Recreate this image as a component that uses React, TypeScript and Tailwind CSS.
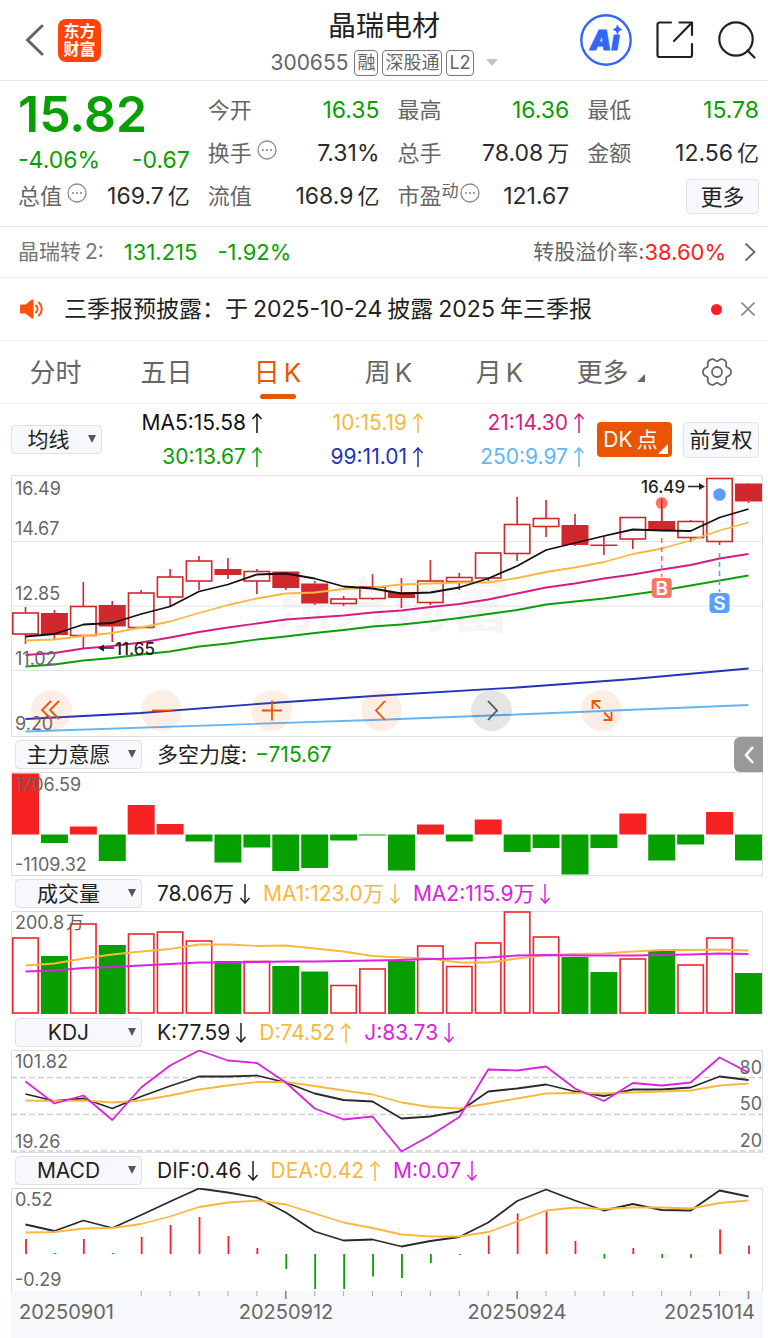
import React from 'react';

const GREEN = '#08a000';
const RED = '#f62222';
const CANDLE = '#d0282c';
const STEP = 28.92;
const cx = (i: number) => 14.5 + STEP * i;

const points = (ys: number[]) => ys.map((y, i) => `${cx(i)},${y}`).join(' ');

// top of body, bottom of body, high, low, filled
const candles: [number, number, number, number, boolean][] = [
  [138, 159, 132, 169, false],
  [138, 160, 135, 164, true],
  [131.5, 160.5, 107, 173, false],
  [130, 151.5, 126, 167, true],
  [118, 152.5, 115, 152.5, false],
  [102, 122, 94, 131, false],
  [86, 106, 81, 115, false],
  [94, 100, 83, 104, true],
  [96.5, 106, 94, 119, false],
  [96.5, 113, 96.5, 115, true],
  [108.5, 128.5, 106, 130, true],
  [124, 128.5, 121, 131, false],
  [112, 123.5, 99, 125, false],
  [117, 123, 103, 133, true],
  [106, 127.5, 85, 130, false],
  [102.5, 106.5, 98, 115, false],
  [78, 103, 78, 106, false],
  [49.5, 78.5, 22, 86, false],
  [43.5, 51.5, 25, 62, false],
  [50, 70, 39, 71, true],
  [69.5, 71, 61, 80, true],
  [42.5, 64, 42.5, 74, false],
  [46, 55, 23, 55, true],
  [46.5, 62.5, 45, 67, false],
  [3.5, 66.5, 3.5, 70, false],
  [8.5, 26.5, 8, 28, true],
];

const ma5 = [161.5, 159, 149.5, 148, 139, 131.5, 116.5, 109.5, 99.5, 98.5, 103.5, 111.5, 113.5, 118.5, 117.5, 112.5, 103.5, 91, 75, 68, 61, 54.5, 55.5, 56, 42.5, 34];
const ma10 = [165.5, 164.5, 161, 158, 152.5, 146.5, 138, 130, 123.5, 118.5, 117.5, 114, 112.5, 109.5, 108.5, 107.5, 107.5, 103, 97, 92.5, 87, 79, 73.5, 65.5, 55.5, 47.5];
const ma21 = [180, 178, 173.5, 171, 167.5, 162.5, 157, 152.5, 148.5, 144.5, 142.5, 140.5, 137.5, 135.5, 132, 129, 124.5, 118.5, 112.5, 108.5, 103.5, 99.5, 94.5, 90, 83.5, 79];
const ma30 = [191.5, 189.5, 185.5, 183, 179.5, 176.5, 171.5, 168.5, 164.5, 161.5, 158, 155, 151.5, 149.5, 146.5, 143, 139, 135, 129.5, 126.5, 123.5, 119.5, 115.5, 110.5, 105.5, 100.5];

const force = [61, -8.5, 8, -26.5, 29.5, 10.5, -7, -28, -13, -36.5, -33.5, -6, -1, -36, 10, -7, 15, -17.5, -13.5, -40, -13.5, 21, -26, -10, 22.5, -26];

// negative = falling day, drawn solid
const volumes = [76, -58, 90, -69, 80, 82, 73, -53, 52.5, -48, -42.5, 28.5, 45, -53, 68, 47.5, 71, 102, 77, -57, -42, 55, -63, 49, 76, -41];
const volMa1 = [54.5, 52.5, 47.5, 43.5, 40.5, 38, 33.5, 33.5, 35, 34.5, 37.5, 40.5, 45, 46.5, 47.5, 51.5, 51.5, 47.5, 44, 43, 42.5, 40.5, 39, 39, 38.5, 39.5];
const volMa2 = [60.5, 59.5, 57, 56, 54.5, 53, 51.5, 51.5, 51, 50.5, 50.5, 50, 49.5, 49, 48, 47.5, 46.5, 44.5, 44, 44.5, 44.5, 44.5, 44, 43.5, 42.5, 43];

const kLine = [44, 51, 48.5, 58.5, 46.5, 36, 26.5, 26.5, 25.5, 32.5, 43.5, 50, 51.5, 68.5, 66.5, 61.5, 41.5, 38.5, 34.5, 41.5, 46, 39.5, 39.5, 37.5, 26.5, 30];
const dLine = [50.5, 51, 50.5, 52.5, 50.5, 45.5, 39.5, 35.5, 32, 32, 36, 40.5, 44.5, 52.5, 57, 58.5, 53.5, 48.5, 43.5, 43, 43.5, 42.5, 41.5, 40.5, 35.5, 33.5];
const jLine = [31.5, 53.5, 45.5, 70, 37.5, 15.5, 0.5, 10.5, 13, 32.5, 58.5, 69.5, 66.5, 101.5, 85.5, 67, 19.5, 20.5, 16.5, 38.5, 51, 33, 35.5, 32.5, 7.5, 22.5];

const dif = [36.5, 43, 32.5, 40, 27, 13.5, 0.5, 4.5, 9.5, 24.5, 43.5, 52.5, 51.5, 58.5, 53, 49, 34.5, 13, 1.5, 12.5, 22.5, 16, 22, 22.5, 2.5, 8.5];
const dea = [44.5, 44, 40.5, 40, 36, 28.5, 19, 14.5, 12.5, 16.5, 25.5, 34.5, 40, 46.5, 48.5, 48.5, 44, 33.5, 22.5, 19.5, 21, 19.5, 19.5, 20.5, 15, 12.5];
const macd = [15, 1, 15, 1, 17, 29, 37, 18, 6, -15, -35, -35, -22.5, -24, -9, -1, 18.5, 40.5, 42.5, 13, -4.5, 6, -4, -4, 24.5, 8.5];

const gear = Array.from({ length: 120 }, (_, n) => {
  const a = (n * Math.PI) / 60;
  const r = 12.7 + 1.6 * Math.cos(6 * a) - 0.3 * Math.cos(12 * a);
  return `${(15 + r * Math.cos(a)).toFixed(2)},${(15 + r * Math.sin(a)).toFixed(2)}`;
}).join(' ');

const Arrow = ({ down = false }: { down?: boolean }) => (
  <svg
    viewBox="0 0 12 20"
    className={down ? 'ml-[5px] h-5 w-3 shrink-0 rotate-180' : 'ml-[5px] h-5 w-3 shrink-0'}
    fill="none"
    stroke="currentColor"
    strokeWidth="1.5"
  >
    <path d="M6 20V1M1.5 6 6 1l4.5 5" />
  </svg>
);

const Dots = () => (
  <svg viewBox="0 0 20 20" className="mb-2 ml-[5px] h-5 w-5 shrink-0" fill="#8a8a8a">
    <circle cx="10" cy="10" r="9" fill="none" stroke="#8a8a8a" strokeWidth="1.3" />
    <circle cx="6" cy="10" r="1.1" />
    <circle cx="10" cy="10" r="1.1" />
    <circle cx="14" cy="10" r="1.1" />
  </svg>
);

type CellProps = {
  label: string;
  value: string;
  unit?: string;
  green?: boolean;
  dots?: boolean;
  sup?: string;
};

const Cell = ({ label, value, unit, green, dots, sup }: CellProps) => (
  <div className="flex h-[43px] items-center justify-between">
    <dt className="flex items-center whitespace-nowrap text-[22px] text-[#666]">
      {label}
      {sup && <span className="mb-3 text-[17px] leading-5">{sup}</span>}
      {dots && (sup ? <span className="-ml-1 flex"><Dots /></span> : <Dots />)}
    </dt>
    <dd className={green ? 'whitespace-nowrap text-[#08a000]' : 'whitespace-nowrap text-[#2b2b2b]'}>
      {value}
      {unit && <span className="ml-1 text-[22px]">{unit}</span>}
    </dd>
  </div>
);

const Picker = ({ label, options, wide }: { label: string; options: string[]; wide?: boolean }) => (
  <div className={wide ? 'relative w-[127px] shrink-0' : 'relative w-[91px] shrink-0'}>
    <select
      aria-label={label}
      className={
        wide
          ? 'block h-[29px] w-full appearance-none rounded border border-[#dfe1e6] bg-[#f7f8fb] pr-5 text-center text-[21px] leading-[27px] text-[#222]'
          : 'block h-[29px] w-full appearance-none rounded border border-[#dfe1e6] bg-[#f7f8fb] pr-4 text-center text-[21px] leading-[27px] text-[#222]'
      }
    >
      {options.map((o) => (
        <option key={o}>{o}</option>
      ))}
    </select>
    <svg viewBox="0 0 8 8" className="pointer-events-none absolute right-[6px] top-[10px] h-2 w-2" fill="#555">
      <path d="M0 0h8L4 8z" />
    </svg>
  </div>
);

const Legend = ({ text, color, down }: { text: string; color: string; down?: boolean }) => (
  <span className="flex items-center whitespace-nowrap" style={{ color }}>
    {text}
    <Arrow down={down} />
  </span>
);

const Frame = ({ h }: { h: number }) => (
  <path d={`M.5 ${h}V.5H751.5V${h}`} fill="none" stroke="#dddee2" />
);

const Line = ({ ys, color }: { ys: number[]; color: string }) => (
  <polyline points={points(ys)} fill="none" stroke={color} strokeWidth="1.8" strokeLinejoin="round" />
);

const KChart = () => (
  <svg viewBox="0 0 752 262" className="block w-full">
    <text x="381" y="152" fontSize="59" fontWeight="700" fill="#f6f6f7" textAnchor="middle">东方财富</text>
    <g stroke="#e3e4ea">
      <path d="M0 66.5H752M0 131H752M0 195.5H752" />
      <path d="M.5 262V.5H751.5V262M0 261.5H752" fill="none" stroke="#dddee2" />
    </g>
    <g stroke={CANDLE} strokeWidth="1.6">
      {candles.map(([top, bottom, high, low, filled], i) => (
        <g key={i}>
          <path d={`M${cx(i)} ${high}V${top}M${cx(i)} ${bottom}V${low}`} />
          {filled ? (
            <rect x={cx(i) - 13.5} y={top} width="27" height={bottom - top} fill={CANDLE} stroke="none" />
          ) : (
            <rect x={cx(i) - 12.7} y={top} width="25.4" height={bottom - top} fill="none" />
          )}
        </g>
      ))}
    </g>
    <Line ys={ma30} color="#0a9e0a" />
    <Line ys={ma21} color="#d81b83" />
    <Line ys={ma10} color="#fbb740" />
    <Line ys={ma5} color="#111" />
    <polyline points="14.5,244 130,238 246,229 362,221 506,212.5 622,204 737.5,193.5" fill="none" stroke="#2233b8" strokeWidth="1.8" />
    <polyline points="14.5,256.5 362,245 506,239.5 737.5,230" fill="none" stroke="#62b6f5" strokeWidth="1.8" />

    <path d="M650.7 63V102" stroke="#ff6a57" strokeWidth="1.6" strokeDasharray="5 4" />
    <circle cx="650.7" cy="28" r="6" fill="#ff7463" />
    <path d="M650.7 24V46" stroke={CANDLE} strokeWidth="1.6" />
    <rect x="640.7" y="103" width="20" height="20" rx="4" fill="#ff7463" />
    <text x="650.7" y="120" fontSize="19" fontWeight="600" fill="#fff" textAnchor="middle">B</text>
    <path d="M708.5 78V117" stroke="#5b9eff" strokeWidth="1.6" strokeDasharray="5 4" />
    <circle cx="708.5" cy="19.5" r="6.3" fill="#5b9eff" />
    <rect x="698.5" y="118" width="20" height="20" rx="4" fill="#5b9eff" />
    <text x="708.5" y="135" fontSize="19" fontWeight="600" fill="#fff" textAnchor="middle">S</text>

    <g fontSize="17" fill="#222" stroke="none">
      <text x="630" y="18" fontWeight="500">16.49</text>
      <path d="M677 11.5H691" stroke="#222" strokeWidth="1.5" />
      <path d="M688 8l6 3.5-6 3.5z" />
      <text x="104" y="180" fontWeight="500">11.65</text>
      <path d="M91 173H103" stroke="#222" strokeWidth="1.5" />
      <path d="M93 169.5l-6 3.5 6 3.5z" />
    </g>
    <g fontSize="18" fill="#666">
      <text x="4" y="20">16.49</text>
      <text x="4" y="60">14.67</text>
      <text x="4" y="125">12.85</text>
      <text x="4" y="190">11.02</text>
      <text x="4" y="255">9.20</text>
    </g>
  </svg>
);

const ForceChart = () => (
  <svg viewBox="0 0 752 104" className="block w-full">
    <Frame h={104} />
    <path d="M0 103.5H752" stroke="#dddee2" />
    {force.map((v, i) => (
      <rect
        key={i}
        x={cx(i) - 13.5}
        y={v > 0 ? 62.5 - v : 62.5}
        width="27"
        height={Math.abs(v)}
        fill={v > 0 ? RED : GREEN}
      />
    ))}
    <g fontSize="18" fill="#666">
      <text x="4" y="19">1706.59</text>
      <text x="4" y="99">-1109.32</text>
    </g>
  </svg>
);

const VolumeChart = () => (
  <svg viewBox="0 0 752 104" className="block w-full">
    <Frame h={104} />
    {volumes.map((v, i) =>
      v > 0 ? (
        <rect key={i} x={cx(i) - 12.7} y={103 - v} width="25.4" height={v - 1} fill="none" stroke="#ee262a" strokeWidth="1.6" />
      ) : (
        <rect key={i} x={cx(i) - 13.5} y={103 + v} width="27" height={-v} fill={GREEN} />
      )
    )}
    <Line ys={volMa1} color="#fbb740" />
    <Line ys={volMa2} color="#d923e0" />
    <g fontSize="18" fill="#666">
      <text x="4" y="18">200.8</text>
      <text x="55" y="18">万</text>
    </g>
  </svg>
);

const KdjChart = () => (
  <svg viewBox="0 0 752 103" className="block w-full">
    <Frame h={103} />
    <path d="M0 102.5H752" stroke="#dddee2" />
    <path d="M0 27.5H752M0 64.5H752M0 101H752" stroke="#cfcfd2" strokeWidth="1.5" strokeDasharray="6 3" />
    <g fontSize="18" fill="#666">
      <text x="4" y="18">101.82</text>
      <text x="4" y="98">19.26</text>
      <g textAnchor="end">
        <text x="751" y="24">80</text>
        <text x="751" y="60">50</text>
        <text x="751" y="97">20</text>
      </g>
    </g>
    <Line ys={kLine} color="#2a2a2a" />
    <Line ys={dLine} color="#fbb740" />
    <Line ys={jLine} color="#d923e0" />
  </svg>
);

const MacdChart = () => (
  <svg viewBox="0 0 752 103" className="block w-full">
    <Frame h={103} />
    {macd.map((v, i) => (
      <path key={i} d={`M${cx(i) + 0.5} 66v${-v}`} stroke={v > 0 ? RED : GREEN} strokeWidth="1.8" />
    ))}
    <Line ys={dif} color="#2a2a2a" />
    <Line ys={dea} color="#fbb740" />
    <g fontSize="18" fill="#666">
      <text x="4" y="18">0.52</text>
      <text x="4" y="98">-0.29</text>
    </g>
  </svg>
);

const TimeAxis = () => (
  <svg viewBox="0 0 752 47" className="block w-full bg-[#f7f8fb]">
    {Array.from({ length: 22 }, (_, n) => n + 4).map((i) => {
      const major = i === 9 || i === 17 || i === 25;
      return (
        <path key={i} d={`M${cx(i)} 0v${major ? 8 : 5}`} stroke={major ? '#888' : '#aaa'} strokeWidth={major ? 1.6 : 1} />
      );
    })}
    <g fontSize="20" fill="#666">
      <text x="8" y="28">20250901</text>
      <text x="275" y="28" textAnchor="middle">20250912</text>
      <text x="506" y="28" textAnchor="middle">20250924</text>
      <text x="744" y="28" textAnchor="end">20251014</text>
    </g>
  </svg>
);

const controls = [
  { name: '最早', d: 'M20 11l-9 9 9 9M28 11l-9 9 9 9' },
  { name: '缩小', d: 'M11 20.5h20' },
  { name: '放大', d: 'M11 20.5h20M21 10.5v20' },
  { name: '前一日', d: 'M24 11l-9 9.5 9 9.5' },
  { name: '后一日', d: 'M17 11l9 9.5-9 9.5' },
  { name: '全屏', d: 'M11.5 19v-8h8M12 11.5l7 7M30.5 22v8h-8M30 29.5l-7-7' },
];

const tabs = ['分时', '五日', '日K', '周K', '月K', '更多'];

const Header = () => (
  <header className="grid h-[81px] grid-cols-[1fr_auto_1fr] items-center border-b border-[#e6e6e6] px-3">
    <div className="ml-3 flex items-center gap-3">
      <button aria-label="返回">
        <svg viewBox="0 0 22 32" className="h-8 w-[22px]" fill="none" stroke="#666" strokeWidth="3" strokeLinecap="round">
          <path d="M18 2 3.5 16 18 30" />
        </svg>
      </button>
      <div className="flex h-[43px] w-[43px] items-center justify-center rounded-lg bg-[#ff430a] text-center text-base font-bold leading-[18px] text-white">
        东方
        <br />
        财富
      </div>
    </div>
    <div className="flex flex-col items-center pt-[3px]">
      <h1 className="text-[28px] leading-9 text-[#222]">晶瑞电材</h1>
      <div className="mt-[6px] flex items-center gap-1 text-[18px] leading-6 text-[#666]">
        <span className="mr-[2px] text-[21px]">300655</span>
        <span className="rounded border border-[#777] px-[2px]">融</span>
        <span className="rounded border border-[#777] px-[2px]">深股通</span>
        <span className="rounded border border-[#777] px-[2px]">L2</span>
        <svg viewBox="0 0 12 7" className="ml-2 h-[7px] w-3" fill="#c4c4c4">
          <path d="M0 0h12L6 7z" />
        </svg>
      </div>
    </div>
    <div className="flex items-center justify-end gap-6">
      <button aria-label="Ai">
        <svg viewBox="0 0 52 52" className="h-[52px] w-[52px]">
          <circle cx="26" cy="26" r="24.7" fill="none" stroke="#3366ff" strokeWidth="2.4" />
          <text x="10" y="36" fontSize="27" fontWeight="900" fontStyle="italic" fill="#3366ff" stroke="#3366ff" strokeWidth="1" strokeLinejoin="round">
            Aı
          </text>
          <path d="M37.5 11c.8 3 1.5 3.7 4.3 4.5-2.8.8-3.5 1.5-4.3 4.5-.8-3-1.5-3.7-4.3-4.5 2.8-.8 3.5-1.5 4.3-4.5z" fill="#3366ff" stroke="#3366ff" />
        </svg>
      </button>
      <button aria-label="分享">
        <svg viewBox="0 0 38 38" className="h-[38px] w-[38px]" fill="none" stroke="#222" strokeWidth="2.2" strokeLinecap="round" strokeLinejoin="round">
          <path d="M15 1.5H3.5a2 2 0 0 0-2 2V34a2 2 0 0 0 2 2H34a2 2 0 0 0 2-2V23M23.5 1.5H36V14M36 1.5 18 20" />
        </svg>
      </button>
      <button aria-label="搜索">
        <svg viewBox="0 0 38 38" className="h-[38px] w-[38px]" fill="none" stroke="#222" strokeWidth="2.2" strokeLinecap="round">
          <circle cx="18" cy="18" r="16.7" />
          <path d="M29.5 29.5 36.5 36.5" />
        </svg>
      </button>
    </div>
  </header>
);

const Quote = () => (
  <section className="border-b border-[#e6e6e6] pb-2 pl-[18px] pr-[9px] pt-2 text-[23px]">
    <dl className="grid grid-cols-4 gap-x-[18px]">
      <div>
        <div className="h-14 text-[50px] font-semibold leading-[50px] text-[#08a000]">15.82</div>
        <div className="flex h-[30px] items-center justify-between text-[#08a000]">
          <span>-4.06%</span>
          <span>-0.67</span>
        </div>
        <Cell label="总值" value="169.7" unit="亿" dots />
      </div>
      <div>
        <Cell label="今开" value="16.35" green />
        <Cell label="换手" value="7.31%" dots />
        <Cell label="流值" value="168.9" unit="亿" />
      </div>
      <div>
        <Cell label="最高" value="16.36" green />
        <Cell label="总手" value="78.08" unit="万" />
        <Cell label="市盈" value="121.67" sup="动" dots />
      </div>
      <div>
        <Cell label="最低" value="15.78" green />
        <Cell label="金额" value="12.56" unit="亿" />
        <div className="flex h-[43px] items-center justify-end">
          <button className="h-[35px] w-[73px] rounded border border-[#dfe1e6] bg-[#f7f8fb] text-[22px] leading-none text-[#222]">更多</button>
        </div>
      </div>
    </dl>
  </section>
);

const App = () => {
  return (
    <main className="w-full bg-white font-[Inter,'Noto_Sans_CJK_SC',sans-serif]">
      <Header />
      <Quote />

      <a href="#bond" className="flex h-[51px] items-center border-b border-[#efefef] pl-[18px] pr-3 text-[22px]">
        <span className="text-[21px] text-[#777]">
          晶瑞转<span className="ml-1">2:</span>
        </span>
        <span className="ml-5 text-[#08a000]">131.215</span>
        <span className="ml-5 text-[#08a000]">-1.92%</span>
        <span className="ml-auto text-[21px] text-[#666]">转股溢价率:</span>
        <span className="text-[#f62222]">38.60%</span>
        <svg viewBox="0 0 12 20" className="ml-[18px] h-5 w-3" fill="none" stroke="#666" strokeWidth="1.8">
          <path d="M1.5 1.5 10.5 10l-9 8.5" />
        </svg>
      </a>

      <section className="flex h-[63px] items-center border-b border-[#efefef] pl-5 pr-[13px] text-[23px] text-[#222]">
        <svg viewBox="0 0 24 20" className="h-5 w-6" fill="#ff5208">
          <path d="M1 5.5h4.5L11.5.8c1-.6 2 0 2 1v16.4c0 1-1 1.6-2 1L5.5 14.5H1c-.6 0-1-.4-1-1v-7c0-.6.4-1 1-1z" />
          <path d="M16 6.5c2 2 2 5 0 7M19 3.5c3.7 3.7 3.7 9.3 0 13" fill="none" stroke="#ff5208" strokeWidth="2" strokeLinecap="round" />
        </svg>
        <p className="ml-5 whitespace-nowrap">
          三季报预披露：于<span className="mx-[5px]">2025-10-24</span>披露<span className="mx-[5px]">2025</span>年三季报
        </p>
        <span className="ml-auto h-[11px] w-[11px] rounded-full bg-[#f62222]" />
        <button aria-label="关闭" className="ml-[19px]">
          <svg viewBox="0 0 14 14" className="h-[14px] w-[14px]" stroke="#888" strokeWidth="1.6">
            <path d="M.5.5l13 13M13.5.5l-13 13" />
          </svg>
        </button>
      </section>

      <nav className="flex h-[63px] border-b border-[#efefef] text-[26px] text-[#666]">
        {tabs.map((t) => (
          <button
            key={t}
            className={t === '日K' ? 'relative flex-1 text-[#ea5504]' : 'relative flex-1'}
          >
            {t.replace('K', '')}
            {t.endsWith('K') && <span className="ml-1">K</span>}
            {t === '日K' && <span className="absolute bottom-1 left-1/2 h-[5px] w-9 -translate-x-1/2 rounded-full bg-[#ea5504]" />}
            {t === '更多' && (
              <svg viewBox="0 0 8 14" className="ml-2 inline h-[14px] w-2 align-text-bottom" fill="#666">
                <path d="M8 0v8H0z" />
              </svg>
            )}
          </button>
        ))}
        <button aria-label="设置" className="flex w-[102px] items-center justify-center">
          <svg viewBox="0 0 30 30" className="h-[30px] w-[30px]" fill="none" stroke="#666" strokeWidth="1.8">
            <polygon points={gear} strokeLinejoin="round" />
            <circle cx="15" cy="15" r="5" />
          </svg>
        </button>
      </nav>

      <div className="pl-[11px] pr-[5px]">
        <div className="flex h-[71px] items-center pr-1">
          <Picker label="主图指标" options={['均线', 'BOLL']} />
          <div className="grid flex-1 grid-cols-3 justify-items-end gap-y-1 text-[21px] leading-[30px]">
            <Legend text="MA5:15.58" color="#111111" />
            <Legend text="10:15.19" color="#fbb740" />
            <Legend text="21:14.30" color="#d81b83" />
            <Legend text="30:13.67" color="#08a000" />
            <Legend text="99:11.01" color="#2233b8" />
            <Legend text="250:9.97" color="#62b6f5" />
          </div>
          <button className="relative ml-3 h-[35px] w-[75px] whitespace-nowrap rounded bg-[#ea5504] pr-2 text-[21px] leading-none text-white">
            DK<span className="ml-1">点</span>
            <svg viewBox="0 0 10 10" className="absolute bottom-[3px] right-[4px] h-[10px] w-[10px]" fill="#fff">
              <path d="M10 0v10H0z" />
            </svg>
          </button>
          <button className="ml-[11px] h-[36px] w-[76px] whitespace-nowrap rounded border border-[#dfe1e6] bg-[#f7f8fb] text-[21px] leading-none text-[#222]">
            前复权
          </button>
        </div>

        <div className="relative">
          <KChart />
          <div className="absolute bottom-[6px] left-5 flex gap-[69px]">
            {controls.map((c) => {
              const gray = c.name === '后一日';
              return (
                <button
                  key={c.name}
                  aria-label={c.name}
                  className={gray ? 'h-[41px] w-[41px] rounded-full bg-black/10' : 'h-[41px] w-[41px] rounded-full bg-[#ea5504]/10'}
                >
                  <svg viewBox="0 0 41 41" className="h-full w-full" fill="none" stroke={gray ? '#555' : '#ea5504'} strokeWidth="1.8">
                    <path d={c.d} />
                  </svg>
                </button>
              );
            })}
          </div>
        </div>

        <div className="flex h-[35px] items-center gap-[15px] pl-1 text-[21px] text-[#222]">
          <Picker wide label="副图指标一" options={['主力意愿', '成交量']} />
          <span>
            多空力度:<span className="ml-2 text-[#08a000]">−715.67</span>
          </span>
          <button aria-label="展开" className="ml-auto flex h-[35px] w-[29px] items-center justify-center rounded-l-md bg-[#999]">
            <svg viewBox="0 0 10 18" className="h-[18px] w-[10px]" fill="none" stroke="#fff" strokeWidth="2.5">
              <path d="M9 1 2 9l7 8" />
            </svg>
          </button>
        </div>
        <ForceChart />

        <div className="flex h-[35px] items-center gap-[15px] pl-1 text-[21px]">
          <Picker wide label="副图指标二" options={['成交量', 'KDJ']} />
          <div className="flex gap-3">
            <Legend text="78.06万" color="#222222" down />
            <Legend text="MA1:123.0万" color="#fbb740" down />
            <Legend text="MA2:115.9万" color="#d923e0" down />
          </div>
        </div>
        <VolumeChart />

        <div className="flex h-[35px] items-center gap-[15px] pl-1 text-[21px]">
          <Picker wide label="副图指标三" options={['KDJ', 'MACD']} />
          <div className="flex gap-3">
            <Legend text="K:77.59" color="#222222" down />
            <Legend text="D:74.52" color="#fbb740" />
            <Legend text="J:83.73" color="#d923e0" down />
          </div>
        </div>
        <KdjChart />

        <div className="flex h-[35px] items-center gap-[15px] pl-1 text-[21px]">
          <Picker wide label="副图指标四" options={['MACD', 'RSI']} />
          <div className="flex gap-3">
            <Legend text="DIF:0.46" color="#222222" down />
            <Legend text="DEA:0.42" color="#fbb740" />
            <Legend text="M:0.07" color="#d923e0" down />
          </div>
        </div>
        <MacdChart />
        <TimeAxis />
      </div>
    </main>
  );
};

export default App;
